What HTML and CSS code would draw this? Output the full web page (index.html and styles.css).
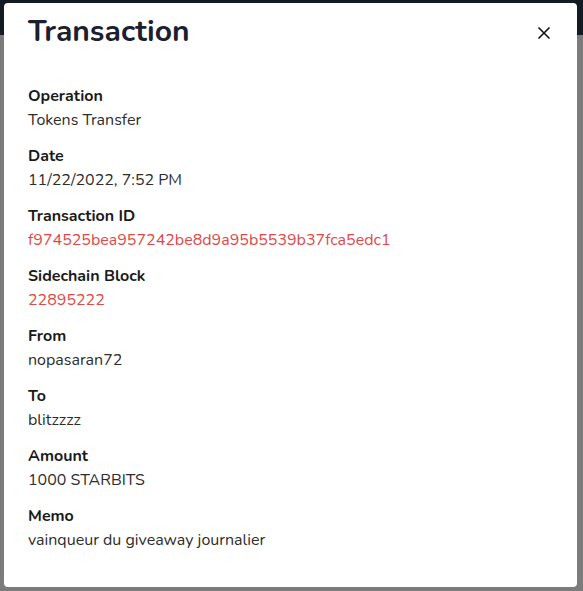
FILE: index.html
```html
<!DOCTYPE html>
<html>
<head>
<meta charset="utf-8">
<link rel="stylesheet" href="styles.css">
</head>
<body>
<div class="modal">
  <div class="header">
    <h1 class="title">Transaction</h1>
    <button class="close" aria-label="Close">
      <svg width="14" height="14" viewBox="0 0 14 14"><path d="M1.5 1.5L12.5 12.5M12.5 1.5L1.5 12.5" stroke="#111" stroke-width="1.6" fill="none"/></svg>
    </button>
  </div>
  <dl class="fields">
    <div class="field"><dt>Operation</dt><dd>Tokens Transfer</dd></div>
    <div class="field"><dt>Date</dt><dd>11/22/2022, 7:52 PM</dd></div>
    <div class="field"><dt>Transaction ID</dt><dd class="link">f974525bea957242be8d9a95b5539b37fca5edc1</dd></div>
    <div class="field"><dt>Sidechain Block</dt><dd class="link">22895222</dd></div>
    <div class="field"><dt>From</dt><dd>nopasaran72</dd></div>
    <div class="field"><dt>To</dt><dd>blitzzzz</dd></div>
    <div class="field"><dt>Amount</dt><dd>1000 STARBITS</dd></div>
    <div class="field"><dt>Memo</dt><dd>vainqueur du giveaway journalier</dd></div>
  </dl>
</div>
</body>
</html>
```
FILE: styles.css
```css
html, body {
  margin: 0;
  padding: 0;
}
body {
  width: 583px;
  height: 591px;
  overflow: hidden;
  background: linear-gradient(to bottom, #141b25 0, #141b25 35px, #7c7c7c 35px, #7c7c7c 100%);
  font-family: "Nunito", Lato, "Noto Sans", sans-serif;
}
.modal {
  margin: 3px 0 0 4px;
  width: 573px;
  height: 584px;
  background: #fff;
  border-radius: 4px;
  box-sizing: border-box;
  padding: 11px 24px 0 24px;
}
.header {
  display: flex;
  align-items: center;
  justify-content: space-between;
}
.title {
  margin: 0;
  font-size: 30px;
  line-height: 36px;
  font-weight: 700;
  color: #1a202c;
}
.close {
  border: 0;
  background: none;
  padding: 0;
  margin-right: 2px;
  margin-top: 2px;
  display: flex;
}
.fields {
  margin: 34px 0 0 0;
  display: flex;
  flex-direction: column;
  gap: 12px;
}
.field dt {
  font-size: 16px;
  line-height: 24px;
  font-weight: 700;
  color: #1a1a1a;
}
.field dd {
  margin: 0;
  font-size: 16px;
  line-height: 24px;
  color: #2d2d2d;
}
.field dd.link {
  color: #e04848;
}
```
